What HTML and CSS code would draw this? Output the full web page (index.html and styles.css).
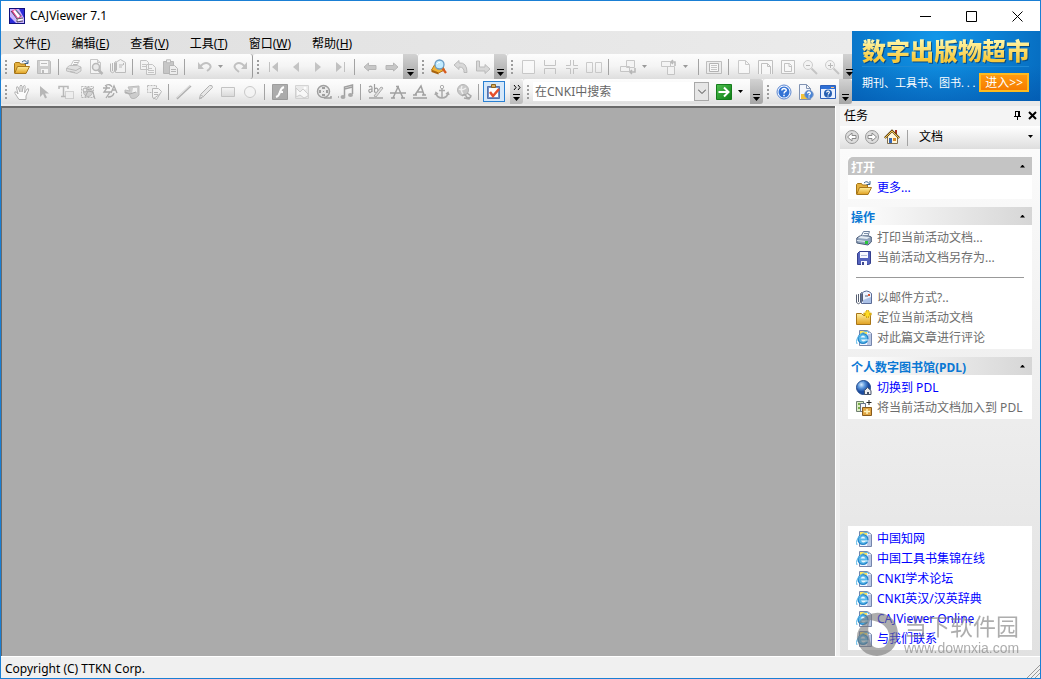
FILE: index.html
```html
<!DOCTYPE html>
<html lang="zh-CN">
<head>
<meta charset="utf-8">
<title>CAJViewer 7.1</title>
<link rel="stylesheet" href="styles.css">
</head>
<body>
<svg class="sprite" aria-hidden="true">
  <defs>
    <linearGradient id="g-folder" x1="0" y1="0" x2="0" y2="1"><stop offset="0" stop-color="#fff0a0"/><stop offset="1" stop-color="#e0a020"/></linearGradient>
    <radialGradient id="g-globe" cx=".35" cy=".3"><stop offset="0" stop-color="#d8ecff"/><stop offset=".5" stop-color="#5b96dc"/><stop offset="1" stop-color="#1c4ca0"/></radialGradient>
    <linearGradient id="g-green" x1="0" y1="0" x2="1" y2="1"><stop offset="0" stop-color="#4fc04f"/><stop offset="1" stop-color="#0b7c14"/></linearGradient>
    <linearGradient id="g-gray" x1="0" y1="0" x2="0" y2="1"><stop offset="0" stop-color="#f6f6f6"/><stop offset="1" stop-color="#d4d4d4"/></linearGradient>
  </defs>
  <symbol id="app" viewBox="0 0 16 16"><path fill="#10107c" d="M0 0h16v16H0z"/><path fill="#c9b4ff" d="M1 1h14v14H1z"/><path fill="#2b2bd8" d="M10 1h5v9zM1 9l6 6H1z"/><path fill="#e33b86" d="M2 3l5-2 6 7-4 3z"/><path fill="#fff" d="M4 3l2-1 5 6-2 2zM7 11l6-1 1 2-6 1z"/><path stroke="#222" stroke-width=".7" d="M2 3l6 8 6-1M8 11v3l6-1" fill="none"/><path stroke="#1ba7a7" d="M7 2l5 6"/></symbol>
  <symbol id="folder" viewBox="0 0 16 16"><path fill="#e5b13f" stroke="#a57515" d="M.5 14V4.500l1-1h4l1 1.500h5V7"/><path fill="url(#g-folder)" stroke="#a8771b" d="M.7 14.500L3.500 7.500h12L12 14.500z"/><path fill="none" stroke="#3b6590" d="M8 3q3-3 5.500 1M14 1v3.500h-3.500"/></symbol>
  <symbol id="save" viewBox="0 0 16 16"><path fill="#c5c5c5" stroke="#b0b0b0" d="M1.500 1.500h12l1 1v12h-13z"/><path fill="#f6f6f6" d="M4 2h8v5H4zM5 10h7v4H5z"/><path fill="#b0b0b0" d="M6 11h2v3H6zM5 4h6v1H5z"/></symbol>
  <symbol id="print" viewBox="0 0 16 16"><path fill="#fafafa" stroke="#b8b8b8" d="M4.500 7l3-5.500h6l-3 5.500"/><path fill="#ddd" stroke="#b4b4b4" d="M.5 9l3-2.500h8L15 8v4l-4 2.500L.5 12z"/><path stroke="#aaa" fill="none" d="M1 9.500l9 2 5-3M4 12.500l5 1M8 3.500h4M7 5.500h4"/></symbol>
  <symbol id="preview" viewBox="0 0 16 16"><path fill="#f8f8f8" stroke="#bbb" d="M2.500.5h7l3 3v11h-10z"/><path fill="#ddd" stroke="#bbb" d="M9.500.5v3h3"/><circle cx="8" cy="8" r="3.500" fill="#e8e8e8" stroke="#aaa" stroke-width="1.500"/><path stroke="#aaa" stroke-width="2.500" d="M10.500 11l4 4"/></symbol>
  <symbol id="mail" viewBox="0 0 16 16"><path fill="#f2f2f2" stroke="#b0b0b0" d="M5.500 13.500v-10l5-3 5 3v10z"/><path fill="none" stroke="#aaa" d="M.5 4.500v8q2 2.500 4 0v-9q1-2 2 0v8M2.500 4v8M9 6h4M9 8h3M13.500 4v2"/></symbol>
  <symbol id="copy" viewBox="0 0 16 16"><path fill="#f4f4f4" stroke="#b8b8b8" d="M.5 1.500h6l2 2v7h-8zM6.500 5.500h6l3 3v7h-9z"/><path stroke="#bbb" d="M2 5.500h4M2 7.500h4M8 9.500h4M8 11.500h6M8 13.500h6"/></symbol>
  <symbol id="paste" viewBox="0 0 16 16"><path fill="#bcbcbc" stroke="#a8a8a8" d="M1.500 2.500h10v12h-10z"/><path fill="#eee" stroke="#aaa" d="M4.500.8h4v3h-4zM7.500 6.500h5l3 3v6h-8z"/><path stroke="#aaa" d="M9 10.500h5M9 12.500h5"/></symbol>
  <symbol id="undo" viewBox="0 0 16 16"><path fill="none" stroke="#b5b5b5" stroke-width="2" d="M4 7.500Q9 2 13 5t-2 7"/><path fill="#b5b5b5" d="M2 3v7h6z"/></symbol>
  <symbol id="redo" viewBox="0 0 16 16"><path fill="none" stroke="#b5b5b5" stroke-width="2" d="M12 7.500Q7 2 3 5t3 8"/><path fill="#b5b5b5" d="M14 3v7H8z"/></symbol>
  <symbol id="first" viewBox="0 0 16 16"><path fill="#b5b5b5" d="M3 3h1v10H3zM12 3v10L6 8z"/></symbol>
  <symbol id="prev" viewBox="0 0 16 16"><path fill="#b9b9b9" d="M11 3v10L5 8z"/></symbol>
  <symbol id="next" viewBox="0 0 16 16"><path fill="#b9b9b9" d="M5 3v10l6-5z"/></symbol>
  <symbol id="last" viewBox="0 0 16 16"><path fill="#b5b5b5" d="M12 3h1v10h-1zM4 3v10l6-5z"/></symbol>
  <symbol id="back" viewBox="0 0 16 16"><path fill="#bdbdbd" stroke="#a7a7a7" d="M2 8l4.500-4v2.500H14v4H6.500V12z"/></symbol>
  <symbol id="forward" viewBox="0 0 16 16"><path fill="#bdbdbd" stroke="#a7a7a7" d="M14 8L9.500 4v2.500H2v4h7.500V12z"/></symbol>
  <symbol id="search" viewBox="0 0 16 16"><path fill="#f0b236" stroke="#b87a17" d="M.5 11l3-5h8l2 5-6 3z"/><path fill="#a8620d" d="M.5 11l7 2.500v2L.5 13z"/><circle cx="8.500" cy="5.500" r="4.500" fill="#c1ebff" stroke="#6a9cc4" stroke-width="1.300"/><path stroke="#d65b20" stroke-width="2.300" d="M11.500 9.500L15 14"/><path stroke="#fff" d="M6 5q1-2 3-1.500" fill="none"/></symbol>
  <symbol id="turnleft" viewBox="0 0 16 16"><path fill="#d2d2d2" stroke="#adadad" d="M1 6l5-4.500V4q8-1 8 9.500h-3Q11.500 8 6 8v2.500z"/></symbol>
  <symbol id="turnright" viewBox="0 0 16 16"><path fill="#d2d2d2" stroke="#adadad" d="M1.500 2h3v6H10V5.500l5 4.500-5 4.500V12H1.500z"/></symbol>
  <symbol id="page1" viewBox="0 0 16 16"><path fill="#fafafa" stroke="#c0c0c0" d="M2.500 1.500h12v13h-12z"/></symbol>
  <symbol id="page2" viewBox="0 0 16 16"><path fill="none" stroke="#b9b9b9" d="M2.500 1v5.500h11V1M2.500 15V9.500h11V15"/></symbol>
  <symbol id="page3" viewBox="0 0 16 16"><path fill="none" stroke="#b9b9b9" d="M2 6.500h4.500V1M14 6.500H9.500V1M2 9.500h4.500V15M14 9.500H9.500V15"/></symbol>
  <symbol id="page4" viewBox="0 0 16 16"><path fill="none" stroke="#c0c0c0" d="M.5 3.500h6v10h-6zM9.500 3.500h6v10h-6z"/></symbol>
  <symbol id="rotate1" viewBox="0 0 16 16"><path fill="#f4f4f4" stroke="#bcbcbc" d="M6.500 1.500h8v7h-8zM.5 7.500h9v5h-9z"/><path fill="none" stroke="#aaa" stroke-width="1.500" d="M15 9v4h-4M12 11l-2 2 2 2"/></symbol>
  <symbol id="rotate2" viewBox="0 0 16 16"><path fill="#f4f4f4" stroke="#bcbcbc" d="M.5 2.500h9v5h-9zM6.500 7.500h7v8h-7z"/><path fill="none" stroke="#aaa" stroke-width="1.500" d="M11 3h3v4M12 1l-2 2 2 2"/></symbol>
  <symbol id="screen" viewBox="0 0 16 16"><path fill="#ececec" stroke="#b0b0b0" d="M.5 2.500h15v12H.5z"/><path fill="#fafafa" stroke="#a4a4a4" d="M3.500 4.500h9v8h-9z"/><path stroke="#bbb" d="M5 6.500h6M5 8.500h6M5 10.500h6"/></symbol>
  <symbol id="doc" viewBox="0 0 16 16"><path fill="#fafafa" stroke="#c0c0c0" d="M2.500 1.500h7l4 4v9h-11zM9.500 1.500v4h4"/></symbol>
  <symbol id="docw" viewBox="0 0 16 16"><path fill="#fafafa" stroke="#b4b4b4" d="M.5 15V1.500h14V15M3.500 15V4.500h6l3 3V15M9.500 4.500v3h3"/></symbol>
  <symbol id="docp" viewBox="0 0 16 16"><path fill="#fafafa" stroke="#b7b7b7" d="M1.500 1.500h13v13h-13zM4.500 4.500h5l2 2v6h-7zM9 4.500v3h3"/></symbol>
  <symbol id="zoomout" viewBox="0 0 16 16"><circle cx="6" cy="6" r="4.500" fill="#f3f3f3" stroke="#c1c1c1"/><path stroke="#aaa" d="M4 6.500h4"/><path stroke="#bbb" stroke-width="2" d="M9.500 9.500L15 15"/></symbol>
  <symbol id="zoomin" viewBox="0 0 16 16"><circle cx="6" cy="6" r="4.500" fill="#f3f3f3" stroke="#c1c1c1"/><path stroke="#aaa" d="M4 6.500h5M6.500 4v5"/><path stroke="#bbb" stroke-width="2" d="M9.500 9.500L15 15"/></symbol>
  <symbol id="hand" viewBox="0 0 16 16"><path fill="#fff" stroke="#a0a0a0" d="M5 15.500L1 9.500Q0 7 2.500 8L4 10 2.500 4q0-2 1.500-1l2 5L6 2q1-2 2 0v6l1.500-6q1.500-1.500 1.700.5L10.500 9 13 5q2-1 1.700 1L12 12v3.500z"/></symbol>
  <symbol id="cursor" viewBox="0 0 16 16"><path fill="#a9a9a9" d="M4 2v11l3-3 2 4.500 2-1L9 9.500h4z"/></symbol>
  <symbol id="textsel" viewBox="0 0 16 16"><path fill="none" stroke="#aaa" stroke-width="1.500" d="M1 5V2.500h9V5M5.500 2.500v10M3 12.500h5"/><path fill="#eee" stroke="#a0a0a0" stroke-dasharray="1 1" d="M7.500 7.500h8v7h-8z"/></symbol>
  <symbol id="imgsel" viewBox="0 0 16 16"><path fill="none" stroke="#aaa" stroke-dasharray="2 1" d="M1.500 2.500h12v11h-12z"/><circle cx="8" cy="8" r="4.500" fill="#ccc" stroke="#aaa"/><circle cx="5" cy="6" r="2" fill="#eee" stroke="#999"/><path fill="none" stroke="#999" d="M7 5l3 1 3-2M5 13l3-6 5 1 2 7"/></symbol>
  <symbol id="ocr" viewBox="0 0 16 16"><path fill="none" stroke="#999" stroke-width="1.300" d="M1 4h7M4 1l1 3-3 4h6L4 14M9 9l3-7 3 7M10 6h4M6 13q5 0 6-4M3 2q5-3 7 1"/></symbol>
  <symbol id="note" viewBox="0 0 16 16"><path fill="#c5c5c5" stroke="#adadad" d="M4 3l11-1v9q-4 5-8 3l-2-4-4-1V6l5 1z"/><path fill="#f4f4f4" d="M9 4h4v4L8 9z"/><path fill="none" stroke="#999" d="M1 8l5 2 6-2"/></symbol>
  <symbol id="docedit" viewBox="0 0 16 16"><path fill="#eee" stroke="#aaa" stroke-dasharray="2 1" d="M1.500 1.500h9v7h-9z"/><path fill="#f4f4f4" stroke="#aaa" d="M6.500 4.500h6l3 3-5 8-4-2z"/><path stroke="#aaa" d="M8 8.500h4M8 10.500h4M7 15l7-5"/></symbol>
  <symbol id="line" viewBox="0 0 16 16"><path stroke="#a0a0a0" stroke-width="1.500" d="M1 15L15 2"/><path stroke="#d0d0d0" d="M0 14L14 1"/></symbol>
  <symbol id="pencil" viewBox="0 0 16 16"><path fill="#e5e5e5" stroke="#a0a0a0" d="M1.500 14.500l1-4 9-9q3-1 3 2l-9 9z"/><path stroke="#aaa" d="M3 11l3 2M1 15l3-1"/></symbol>
  <symbol id="rect" viewBox="0 0 16 16"><path fill="url(#g-gray)" stroke="#b7b7b7" d="M1.500 3.500h13v9h-13z"/></symbol>
  <symbol id="ellipse" viewBox="0 0 16 16"><circle cx="8" cy="8" r="5.500" fill="#f4f4f4" stroke="#bdbdbd"/></symbol>
  <symbol id="flash" viewBox="0 0 16 16"><path fill="#9b9b9b" stroke="#888" d="M.5.5h15v15H.5z"/><path fill="none" stroke="#fff" stroke-width="2" d="M4 13q3-1 4-5t4-5M7 8h4"/></symbol>
  <symbol id="picture" viewBox="0 0 16 16"><path fill="#e8e8e8" stroke="#ccc" d="M1.500 1.500h13v13h-13z"/><path fill="#fafafa" stroke="#c4c4c4" d="M2 4l4 4 3-3 5 5v2l-4 2-4-3-4 2z"/><circle cx="11" cy="4" r="1.500" fill="#fff"/></symbol>
  <symbol id="film" viewBox="0 0 16 16"><circle cx="7.500" cy="7.500" r="6" fill="#e8e8e8" stroke="#8b8b8b" stroke-width="1.500"/><path fill="#8b8b8b" d="M6 3h3v2H6zM3 6h2v3H3zM10 6h2v3h-2zM6 10h3v2H6zM7 7h1v1H7z"/><path fill="none" stroke="#8b8b8b" stroke-width="1.500" d="M8 14h7v-2"/></symbol>
  <symbol id="music" viewBox="0 0 16 16"><path fill="none" stroke="#8b8b8b" stroke-width="1.500" d="M6.500 12V3l8-2v9M6.500 5l8-2"/><ellipse cx="5" cy="13" rx="2.500" ry="2" fill="#999"/><ellipse cx="12.500" cy="11" rx="2.500" ry="2" fill="#999"/><path fill="#aaa" d="M0 12h1v2H0z"/></symbol>
  <symbol id="highlight" viewBox="0 0 16 16"><path fill="none" stroke="#888" stroke-width="1.200" d="M1 3q3-2 3 1v4M4 5Q0 5 1 7.500t3-1M6.500 0v8q4 1 3.500-2T6.500 5"/><path fill="#ddd" stroke="#999" d="M6 12l7-9 2 1-7 9z"/><path stroke="#aaa" stroke-width="2" d="M1 14h14"/></symbol>
  <symbol id="strike" viewBox="0 0 16 16"><path fill="none" stroke="#8d8d8d" stroke-width="1.500" d="M3 14l5-11 5 11M1 14h4M11 14h4M0 9h16M6 2.500h3"/></symbol>
  <symbol id="under" viewBox="0 0 16 16"><path fill="none" stroke="#8d8d8d" stroke-width="1.500" d="M3 11l6-9 3 9M1 11h4M10 11h4M5 8h6M1 14h14"/></symbol>
  <symbol id="anchor" viewBox="0 0 16 16"><circle cx="8" cy="3" r="1.700" fill="none" stroke="#999"/><path fill="none" stroke="#999" stroke-width="1.500" d="M8 5v9M5 6.500h6M2 9q1 5 6 5t6-5M1 11l1-2.500L4 10M15 11l-1-2.500L12 10"/></symbol>
  <symbol id="link" viewBox="0 0 16 16"><circle cx="7" cy="6" r="5.500" fill="#bebebe" stroke="#a5a5a5"/><path fill="none" stroke="#eee" stroke-width="1.500" d="M3 5q3 2 7-1M6 2q-2 4 1 8"/><path fill="none" stroke="#999" stroke-width="1.500" d="M6 12q3-3 4 0t5 1M11 9l4 3-2 3-5-1"/></symbol>
  <symbol id="task" viewBox="0 0 16 16"><path fill="#7591c4" stroke="#5272ae" d="M1.500 2.500h12v12h-12z"/><path fill="#fff" d="M3 4h9v9H3z"/><path fill="#d7ac5b" stroke="#8d6420" d="M5.500.5h4v3h-4z"/><path fill="none" stroke="#e8502b" stroke-width="2.500" d="M4 8l3 4 6-7"/></symbol>
  <symbol id="go" viewBox="0 0 16 16"><path fill="url(#g-green)" stroke="#147c1b" d="M.5.5h15v15H.5z"/><path fill="none" stroke="#fff" stroke-width="2" d="M2.500 8h10M8 3.500L12.500 8 8 12.500"/></symbol>
  <symbol id="help" viewBox="0 0 16 16"><circle cx="8" cy="8" r="7" fill="#f4f8ff" stroke="#5c87d0"/><circle cx="8" cy="8" r="5.500" fill="#3373d5"/><path fill="none" stroke="#fff" stroke-width="1.500" d="M5.800 6.500q.2-2 2.300-2 3 .5 1.800 2.500Q8 8 8 9.500M8 10.800v1.500"/></symbol>
  <symbol id="helpdoc" viewBox="0 0 16 16"><path fill="#f3f6fc" stroke="#8092b2" d="M1.500.5h7l4 4v11h-11zM8.500.5v4h4"/><path fill="#f3c33b" d="M3 10h7v5H3z"/><circle cx="11" cy="10.500" r="4.200" fill="#4a85d6" stroke="#7b98c6"/><path fill="none" stroke="#fff" stroke-width="1.300" d="M9.500 9.500q0-1.500 1.500-1.500 2 .5 1 2-1 .5-1 1.500M11 12.500v1"/></symbol>
  <symbol id="helpwin" viewBox="0 0 16 16"><path fill="#eaf1ff" stroke="#2d61bb" d="M.5 1.500h15v13H.5z"/><path fill="#2f70d6" d="M1 2h14v3H1z"/><path fill="#ffbe78" d="M11 3h3v1h-3z"/><circle cx="8" cy="9.500" r="4" fill="#265fb2"/><path fill="none" stroke="#fff" stroke-width="1.200" d="M6.700 8.500q0-1.500 1.500-1.300t1 1.600L8 10.500M8 11.500v1"/></symbol>
  <symbol id="circback" viewBox="0 0 16 16"><circle cx="8" cy="8" r="6.500" fill="#ddd" stroke="#999"/><path fill="#fff" stroke="#8b8b8b" d="M3.500 8L8 4v2.500h4v3H8V12z"/></symbol>
  <symbol id="circfwd" viewBox="0 0 16 16"><circle cx="8" cy="8" r="6.500" fill="#ddd" stroke="#999"/><path fill="#fff" stroke="#8b8b8b" d="M12.500 8L8 4v2.500H4v3h4V12z"/></symbol>
  <symbol id="home" viewBox="0 0 16 16"><path fill="#fff5d8" stroke="#7f6d4e" d="M3.500 7.500v7h10v-7L8 2z"/><path fill="#a32f1d" d="M11 1h2v4h-2z"/><path fill="none" stroke="#624514" stroke-width="2.200" d="M.8 9L8 1.800 15.200 9"/><path fill="none" stroke="#f2c44d" d="M1 9l7-7 7 7"/><path fill="#3667b6" d="M5 9h3v5H5z"/><path fill="#d88c2b" d="M9 9h3v3H9z"/></symbol>
  <symbol id="cprint" viewBox="0 0 16 16"><path fill="#f6fbff" stroke="#6b7f9d" d="M4.500 7l3-5.500h6L11.500 7"/><path fill="#91a4bd" stroke="#4a5c78" d="M.8 8l3-2h9L15.300 7v5L12 15 .8 13z"/><path fill="#e4ecf4" d="M2 8l9 1 3-2-9-1zM1 10l9 1v1L1 11z"/><path fill="#28c63b" d="M9 11h3v3H9z"/><path stroke="#8091a8" d="M8 3.500h4M7 5.500h4"/></symbol>
  <symbol id="csave" viewBox="0 0 16 16"><path fill="#5463bd" stroke="#353f8d" d="M1.500 3.500l2-2h11v12l-2 1h-11z"/><path fill="#f7f9ff" d="M4 2h8v6H4zM5 11h6v4H5z"/><path fill="#3d478f" d="M6 12h2v3H6z"/><path stroke="#b3bddb" d="M5 5.500h6"/></symbol>
  <symbol id="cmail" viewBox="0 0 16 16"><path fill="#edf3ff" stroke="#5a6b96" d="M5.500 13.500v-10q5-5 10 0v10z"/><path fill="#abc1e7" d="M7 10l8-3v6H7z"/><path fill="none" stroke="#565f72" d="M.5 4.500v8q2 2.500 4 0v-9q1-2 2 0v8M2.500 4v8M9 6h3"/><path fill="#df5533" d="M12 4h2v2h-2z"/></symbol>
  <symbol id="cfolder" viewBox="0 0 16 16"><path fill="url(#g-folder)" stroke="#a87518" d="M.5 14.500v-11h5l2 2h7v9z"/><path stroke="#b88200" stroke-width="2.400" d="M11.500 0v8M7.500 4h8"/><path stroke="#ffdc24" stroke-width="1.200" d="M11.500 0v8M7.500 4h8M9 1.500l5 5M14 1.500l-5 5"/></symbol>
  <symbol id="ie" viewBox="0 0 16 16"><path fill="#f3f6ff" stroke="#7585ab" d="M3.500.5h8l4 3v12h-12z"/><path fill="#ffe45c" d="M4 1h7v3H4z"/><path fill="#b8c7e4" d="M12 1v3h3v11h-4z"/><circle cx="7" cy="8.500" r="5.500" fill="#2384c9"/><circle cx="7" cy="8.500" r="4.300" fill="#58b7e8"/><path fill="#e9f9ff" d="M4.500 7.500q2.500-4 5 0zM5 9.500h7.500v1H9.500q-3 2.500-4.500-1z"/><path fill="none" stroke="#58b7e8" d="M1 14Q-1 9 5 4t8-1"/></symbol>
  <symbol id="globe" viewBox="0 0 16 16"><circle cx="7.500" cy="7.500" r="7" fill="url(#g-globe)" stroke="#234b8d"/><path fill="#eee" stroke="#46536a" d="M8.500 14.500v-4l3-3 3.500 3v4z"/><path fill="#46536a" d="M11 12h2v3h-2z"/></symbol>
  <symbol id="addlib" viewBox="0 0 16 16"><path fill="#dcebc4" stroke="#6e7f6f" d="M.5 1.500h7v10h-7z"/><path fill="#76ab48" d="M2 3h3v2H2zM2 7h3v2H2z"/><path fill="#f4f6fb" stroke="#69748a" d="M4.500 3.500h5v8h-5z"/><path fill="#dfa443" stroke="#885b1c" d="M6.500 7.500h9v8h-9z"/><path stroke="#fff4bd" stroke-width="1.500" d="M8 11.500h6M11 9v5"/><path stroke="#222" d="M13 0v5M10.500 2.500h5"/></symbol>
</svg>

<div class="window">
  <header class="titlebar">
    <svg class="ico"><use href="#app"/></svg>
    <h1 class="title">CAJViewer 7.1</h1>
    <div class="caption">
      <button class="cap" aria-label="最小化"><svg class="capico" viewBox="0 0 11 11"><path d="M0 5.500h11"/></svg></button>
      <button class="cap" aria-label="最大化"><svg class="capico" viewBox="0 0 11 11"><path d="M.5.5h10v10H.5z"/></svg></button>
      <button class="cap" aria-label="关闭"><svg class="capico" viewBox="0 0 11 11"><path d="M.5.500l10 10M10.500.500l-10 10"/></svg></button>
    </div>
  </header>

  <div class="top">
    <div class="bars">
      <nav class="menu">
        <button>文件(<u>F</u>)</button><button>编辑(<u>E</u>)</button><button>查看(<u>V</u>)</button><button>工具(<u>T</u>)</button><button>窗口(<u>W</u>)</button><button>帮助(<u>H</u>)</button>
      </nav>
      <div class="row">
        <div class="bar bracket">
          <i class="grip"></i>
          <button class="tool" aria-label="打开"><svg class="ico"><use href="#folder"/></svg></button>
          <button class="tool" disabled aria-label="保存"><svg class="ico"><use href="#save"/></svg></button>
          <i class="sep"></i>
          <button class="tool" disabled aria-label="打印"><svg class="ico"><use href="#print"/></svg></button>
          <button class="tool" disabled aria-label="预览"><svg class="ico"><use href="#preview"/></svg></button>
          <button class="tool" disabled aria-label="邮件"><svg class="ico"><use href="#mail"/></svg></button>
          <i class="sep"></i>
          <button class="tool" disabled aria-label="复制"><svg class="ico"><use href="#copy"/></svg></button>
          <button class="tool" disabled aria-label="粘贴"><svg class="ico"><use href="#paste"/></svg></button>
          <i class="sep"></i>
          <button class="tool split" disabled aria-label="撤销"><svg class="ico"><use href="#undo"/></svg><i class="caret dim"></i></button>
          <button class="tool" disabled aria-label="重做"><svg class="ico"><use href="#redo"/></svg></button>
        </div>
        <div class="bar">
          <i class="grip"></i>
          <button class="tool" disabled aria-label="首页"><svg class="ico"><use href="#first"/></svg></button>
          <button class="tool" disabled aria-label="上一页"><svg class="ico"><use href="#prev"/></svg></button>
          <button class="tool" disabled aria-label="下一页"><svg class="ico"><use href="#next"/></svg></button>
          <button class="tool" disabled aria-label="末页"><svg class="ico"><use href="#last"/></svg></button>
          <i class="sep"></i>
          <button class="tool" disabled aria-label="后退"><svg class="ico"><use href="#back"/></svg></button>
          <button class="tool" disabled aria-label="前进"><svg class="ico"><use href="#forward"/></svg></button>
          <button class="more wide" aria-label="选项"><i class="caret"></i></button>
        </div>
        <div class="bar">
          <i class="grip"></i>
          <button class="tool" aria-label="搜索"><svg class="ico"><use href="#search"/></svg></button>
          <button class="tool" disabled aria-label="上一个"><svg class="ico"><use href="#turnleft"/></svg></button>
          <button class="tool" disabled aria-label="下一个"><svg class="ico"><use href="#turnright"/></svg></button>
          <button class="more" aria-label="选项"><i class="caret"></i></button>
        </div>
        <div class="bar grow">
          <i class="grip"></i>
          <button class="tool" disabled aria-label="单页"><svg class="ico"><use href="#page1"/></svg></button>
          <button class="tool" disabled aria-label="连续"><svg class="ico"><use href="#page2"/></svg></button>
          <button class="tool" disabled aria-label="连续对开"><svg class="ico"><use href="#page3"/></svg></button>
          <button class="tool" disabled aria-label="对开"><svg class="ico"><use href="#page4"/></svg></button>
          <i class="sep"></i>
          <button class="tool split" disabled aria-label="旋转全部"><svg class="ico"><use href="#rotate1"/></svg><i class="caret dim"></i></button>
          <button class="tool split" disabled aria-label="旋转"><svg class="ico"><use href="#rotate2"/></svg><i class="caret dim"></i></button>
          <i class="sep"></i>
          <button class="tool" disabled aria-label="全屏"><svg class="ico"><use href="#screen"/></svg></button>
          <i class="sep"></i>
          <button class="tool" disabled aria-label="实际大小"><svg class="ico"><use href="#doc"/></svg></button>
          <button class="tool" disabled aria-label="适合宽度"><svg class="ico"><use href="#docw"/></svg></button>
          <button class="tool" disabled aria-label="适合页面"><svg class="ico"><use href="#docp"/></svg></button>
          <button class="tool" disabled aria-label="缩小"><svg class="ico"><use href="#zoomout"/></svg></button>
          <button class="tool" disabled aria-label="放大"><svg class="ico"><use href="#zoomin"/></svg></button>
          <button class="more" aria-label="选项"><i class="caret"></i></button>
        </div>
      </div>
      <div class="row">
        <div class="bar">
          <i class="grip"></i>
          <button class="tool" disabled aria-label="手形"><svg class="ico"><use href="#hand"/></svg></button>
          <button class="tool" disabled aria-label="选择"><svg class="ico"><use href="#cursor"/></svg></button>
          <button class="tool" disabled aria-label="文本选择"><svg class="ico"><use href="#textsel"/></svg></button>
          <button class="tool" disabled aria-label="图像选择"><svg class="ico"><use href="#imgsel"/></svg></button>
          <button class="tool" disabled aria-label="文字识别"><svg class="ico"><use href="#ocr"/></svg></button>
          <button class="tool" disabled aria-label="注释"><svg class="ico"><use href="#note"/></svg></button>
          <button class="tool" disabled aria-label="编辑"><svg class="ico"><use href="#docedit"/></svg></button>
          <i class="sep"></i>
          <button class="tool" disabled aria-label="直线"><svg class="ico"><use href="#line"/></svg></button>
          <button class="tool" disabled aria-label="曲线"><svg class="ico"><use href="#pencil"/></svg></button>
          <button class="tool" disabled aria-label="矩形"><svg class="ico"><use href="#rect"/></svg></button>
          <button class="tool" disabled aria-label="椭圆"><svg class="ico"><use href="#ellipse"/></svg></button>
          <i class="sep"></i>
          <button class="tool" disabled aria-label="动画"><svg class="ico"><use href="#flash"/></svg></button>
          <button class="tool" disabled aria-label="图片"><svg class="ico"><use href="#picture"/></svg></button>
          <button class="tool" disabled aria-label="视频"><svg class="ico"><use href="#film"/></svg></button>
          <button class="tool" disabled aria-label="音乐"><svg class="ico"><use href="#music"/></svg></button>
          <i class="sep"></i>
          <button class="tool" disabled aria-label="高亮"><svg class="ico"><use href="#highlight"/></svg></button>
          <button class="tool" disabled aria-label="删除线"><svg class="ico"><use href="#strike"/></svg></button>
          <button class="tool" disabled aria-label="下划线"><svg class="ico"><use href="#under"/></svg></button>
          <button class="tool" disabled aria-label="书签"><svg class="ico"><use href="#anchor"/></svg></button>
          <button class="tool" disabled aria-label="链接"><svg class="ico"><use href="#link"/></svg></button>
          <i class="sep"></i>
          <button class="tool on" aria-label="任务"><svg class="ico"><use href="#task"/></svg></button>
          <button class="more spaced" aria-label="更多"><svg class="chev" viewBox="0 0 8 5"><path d="M1 0l2 2.500L1 5M5 0l2 2.500L5 5"/></svg><i class="caret"></i></button>
        </div>
        <div class="bar">
          <i class="grip"></i>
          <div class="combo"><input aria-label="搜索" value="在CNKI中搜索"><button aria-label="展开"><svg class="drop" viewBox="0 0 8 5"><path d="M0 .5l4 4 4-4"/></svg></button></div>
          <button class="tool split" aria-label="转到"><svg class="ico"><use href="#go"/></svg><i class="caret"></i></button>
          <button class="more" aria-label="选项"><i class="caret"></i></button>
        </div>
        <div class="bar grow">
          <i class="grip"></i>
          <button class="tool" aria-label="帮助"><svg class="ico"><use href="#help"/></svg></button>
          <button class="tool" aria-label="文档帮助"><svg class="ico"><use href="#helpdoc"/></svg></button>
          <button class="tool" aria-label="帮助窗口"><svg class="ico"><use href="#helpwin"/></svg></button>
          <button class="more" aria-label="选项"><i class="caret"></i></button>
        </div>
      </div>
    </div>
    <div class="banner">
      <strong>数字出版物超市</strong>
      <div class="promo"><span>期刊、工具书、图书. . .</span><a href="#enter">进入&gt;&gt;</a></div>
    </div>
  </div>

  <div class="main">
    <main class="workspace"></main>
    <aside class="side">
      <div class="sidehead"><h2>任务</h2>
        <button aria-label="固定"><svg class="mini" viewBox="0 0 9 9"><path d="M2.500 0v5M6.500 0v5M2 .5h5M5.500 0v5M1 5.500h7M4.500 5v4"/></svg></button>
        <button aria-label="关闭"><svg class="mini thick" viewBox="0 0 9 9"><path d="M1 1l7 7M8 1L1 8"/></svg></button>
      </div>
      <div class="sidebar">
        <button aria-label="后退"><svg class="ico"><use href="#circback"/></svg></button>
        <button aria-label="前进"><svg class="ico"><use href="#circfwd"/></svg></button>
        <button aria-label="主页"><svg class="ico"><use href="#home"/></svg></button>
        <i class="sep"></i>
        <button class="pick">文档<i class="caret"></i></button>
      </div>
      <div class="panels">
        <section class="panel">
          <h3 class="head dark">打开<i class="up"></i></h3>
          <ul><li><a href="#more"><svg class="ico"><use href="#folder"/></svg>更多...</a></li></ul>
        </section>
        <section class="panel">
          <h3 class="head">操作<i class="up"></i></h3>
          <ul>
            <li><a class="off"><svg class="ico"><use href="#cprint"/></svg>打印当前活动文档...</a></li>
            <li><a class="off"><svg class="ico"><use href="#csave"/></svg>当前活动文档另存为...</a></li>
          </ul>
          <hr>
          <ul>
            <li><a class="off"><svg class="ico"><use href="#cmail"/></svg>以邮件方式?..</a></li>
            <li><a class="off"><svg class="ico"><use href="#cfolder"/></svg>定位当前活动文档</a></li>
            <li><a class="off"><svg class="ico"><use href="#ie"/></svg>对此篇文章进行评论</a></li>
          </ul>
        </section>
        <section class="panel">
          <h3 class="head">个人数字图书馆(PDL)<i class="up"></i></h3>
          <ul>
            <li><a href="#pdl"><svg class="ico"><use href="#globe"/></svg>切换到 PDL</a></li>
            <li><a class="off"><svg class="ico"><use href="#addlib"/></svg>将当前活动文档加入到 PDL</a></li>
          </ul>
        </section>
        <section class="panel links">
          <ul>
            <li><a href="#cnki"><svg class="ico"><use href="#ie"/></svg>中国知网</a></li>
            <li><a href="#ref"><svg class="ico"><use href="#ie"/></svg>中国工具书集锦在线</a></li>
            <li><a href="#forum"><svg class="ico"><use href="#ie"/></svg>CNKI学术论坛</a></li>
            <li><a href="#dict"><svg class="ico"><use href="#ie"/></svg>CNKI英汉/汉英辞典</a></li>
            <li><a href="#online"><svg class="ico"><use href="#ie"/></svg>CAJViewer Online</a></li>
            <li><a href="#contact"><svg class="ico"><use href="#ie"/></svg>与我们联系</a></li>
          </ul>
          <div class="mark">
            <svg class="marklogo" viewBox="0 0 42 44"><path fill-rule="evenodd" d="M2 11Q14-3 29 2 42 8 42 23 40 42 21 44 4 43 1 27 0 17 9 11zM14 8Q10 17 15 32 19 38 28 35 34 30 33 22 30 10 14 8z"/></svg>
            <div><b>当下软件园</b><small>www.downxia.com</small></div>
          </div>
        </section>
      </div>
    </aside>
  </div>

  <footer class="status"><span>Copyright (C) TTKN Corp.</span><svg class="size" viewBox="0 0 13 13"><path d="M0 13L13 0M4 13l9-9M8 13l5-5"/></svg></footer>
</div>
</body>
</html>
```
FILE: styles.css
```css
* { box-sizing: border-box; }
body {
  margin: 0;
  font: 12px/16px "Noto Sans", "Noto Sans CJK SC", sans-serif;
  color: #000;
}
button { border: 0; padding: 0; background: none; font: inherit; color: inherit; }
h1, h2, h3, ul { margin: 0; padding: 0; font: inherit; list-style: none; }
i { font-style: normal; }
.sprite { position: absolute; width: 0; height: 0; }
.ico { width: 16px; height: 16px; flex: none; display: block; }

.window {
  height: 100vh;
  display: flex;
  flex-direction: column;
  border: 1px solid #1a7fd4;
  background: #f0f0f0;
}

.titlebar { display: flex; align-items: center; height: 30px; padding-left: 8px; gap: 5px; background: #fff; }
.caption { display: flex; margin-left: auto; align-self: stretch; }
.cap { width: 46px; display: grid; place-items: center; }
.capico { width: 11px; height: 11px; fill: none; stroke: #000; }

.top { display: flex; height: 75px; background: #e9e9e9; }
.bars { flex: 1; display: flex; flex-direction: column; min-width: 0; }
.menu { display: flex; align-items: center; gap: 21px; height: 23px; padding: 2px 0 0 12px; background: linear-gradient(90deg, #dfdfdf, #ebebeb); }
.row { display: flex; height: 25px; background: #e4e4e4; }
.bar { display: flex; align-items: stretch; flex: none; background: linear-gradient(#fdfdfd, #f4f4f4 50%, #dedede); border-radius: 3px 0 0 3px; }
.bar.grow { flex: 1; }
.bracket { border-right: 1px solid #999; border-radius: 3px; }
.grip { width: 10px; flex: none; }
.grip::before { content: ""; display: block; width: 2px; height: 14px; margin: 6px 4px; background: repeating-linear-gradient(#9c9c9c 0 2px, transparent 2px 4px); }
.tool { width: 22px; flex: none; display: flex; align-items: center; justify-content: center; }
.tool:disabled .ico { opacity: .8; }
.split { width: 41px; gap: 6px; }
.on { height: 21px; margin-top: 2px; border: 1px solid #2a80d2; background: #d5e8fa; }
.sep { width: 8px; flex: none; }
.sep::before { content: ""; display: block; width: 1px; height: 16px; margin: 5px 3px; background: #a3a3a3; }
.caret { width: 5px; height: 3px; flex: none; background: #000; clip-path: polygon(0 0, 100% 0, 50% 100%); }
.dim { background: #999; }
.more { width: 13px; margin-left: auto; display: flex; flex-direction: column; align-items: center; justify-content: flex-end; gap: 4px; padding-bottom: 3px; background: linear-gradient(#d2d2d2, #a6a6a6); border-radius: 0 3px 3px 0; }
.more .caret { width: 7px; height: 7px; clip-path: polygon(0 0, 100% 0, 100% 14%, 0 14%, 0 43%, 100% 43%, 50% 100%, 0 43%, 0 0); }
.wide { width: 15px; }
.spaced { margin-left: 5px; background: linear-gradient(#eee, #bbb); }
.chev { width: 8px; height: 5px; fill: none; stroke: #000; }
.combo { display: flex; width: 176px; height: 19px; margin-top: 3px; background: #fff; }
.combo input { flex: 1; min-width: 0; border: 0; padding: 0 2px; background: none; font: inherit; color: #666; }
.combo button { width: 15px; display: grid; place-items: center; border: 1px solid #a8a8a8; background: #e6e6e6; }
.drop { width: 8px; height: 5px; fill: none; stroke: #444; }

.banner {
  width: 188px;
  height: 70px;
  padding: 3px 11px 5px 10px;
  background: linear-gradient(rgba(0, 70, 160, 0) 50%, rgba(0, 70, 160, .35)), radial-gradient(circle at 45% 10%, #1296e8, #0569bd);
}
.banner strong {
  display: block;
  font: 900 24px/32px "Noto Sans CJK SC", sans-serif;
  white-space: nowrap;
  background: linear-gradient(#fff6a8 20%, #f8c93c 80%);
  -webkit-background-clip: text;
  background-clip: text;
  color: transparent;
  filter: drop-shadow(1px 1px 0 #064a86);
}
.promo { display: flex; justify-content: space-between; align-items: center; height: 32px; border-top: 1px solid #1f89d4; color: #fff; font-size: 11px; white-space: nowrap; }
.promo a { padding: 0 4px; border: 2px solid #ffba1e; background: linear-gradient(#ff9a10, #f57c00); color: #fff; font-size: 12px; text-decoration: none; line-height: 15px; }

.main { flex: 1; display: flex; min-height: 0; }
.workspace { flex: 1; margin-right: 5px; background: #ababab; border: 1px solid #696969; border-width: 2px 0 0 1px; box-shadow: 1px 0 #fff; }
.side { width: 200px; display: flex; flex-direction: column; background: #f4f4f4; }
.sidehead { display: flex; align-items: center; height: 20px; padding: 0 3px 1px 4px; gap: 6px; }
.sidehead h2 { flex: 1; padding-top: 1px; }
.mini { width: 9px; height: 9px; display: block; fill: none; stroke: #000; }
.thick { stroke-width: 2; }
.sidebar { display: flex; align-items: center; height: 23px; padding: 0 0 2px 4px; gap: 4px; background: linear-gradient(#fff, #dedede); }
.sidebar .sep { height: 23px; }
.pick { flex: 1; display: flex; align-items: center; justify-content: space-between; padding: 0 7px 0 3px; }
.panels { flex: 1; display: flex; flex-direction: column; gap: 8px; padding: 8px 8px 6px; background: linear-gradient(#fbfbfb, #e1e1e1); }
.panel { background: #fff; padding-bottom: 1px; }
.panel li a { display: flex; align-items: center; gap: 5px; height: 20px; padding-left: 8px; color: #00f; text-decoration: none; white-space: nowrap; }
.panel li a.off { color: #6d6d6d; }
.panel ul { padding-top: 3px; }
.panel hr { height: 1px; margin: 9px 8px 7px; border: 0; background: #999; }
.head { display: flex; align-items: center; justify-content: space-between; height: 18px; padding: 3px 7px 0 3px; font-weight: 700; color: #0a78d4; background: linear-gradient(90deg, #fff, #d6d6d6); white-space: nowrap; }
.dark { color: #fff; background: #c4c4c4; border-radius: 5px 0 0; }
.up { width: 5px; height: 3px; margin-bottom: 3px; background: #000; clip-path: polygon(0 100%, 100% 100%, 50% 0); }
.links { position: relative; margin-top: auto; }
.mark { position: absolute; left: 8px; bottom: -6px; display: flex; gap: 6px; color: #777; opacity: .6; white-space: nowrap; pointer-events: none; }
.marklogo { width: 42px; height: 44px; fill: #777; }
.mark b, .mark small { display: block; font-weight: 400; }
.mark b { font-size: 23px; line-height: 28px; }
.mark small { font: 14px/16px "Liberation Sans", sans-serif; }

.status { display: flex; align-items: center; height: 22px; padding: 3px 0 0 4px; border-top: 1px solid #fff; }
.size { width: 13px; height: 13px; margin-left: auto; align-self: flex-end; stroke: #999; }
```
